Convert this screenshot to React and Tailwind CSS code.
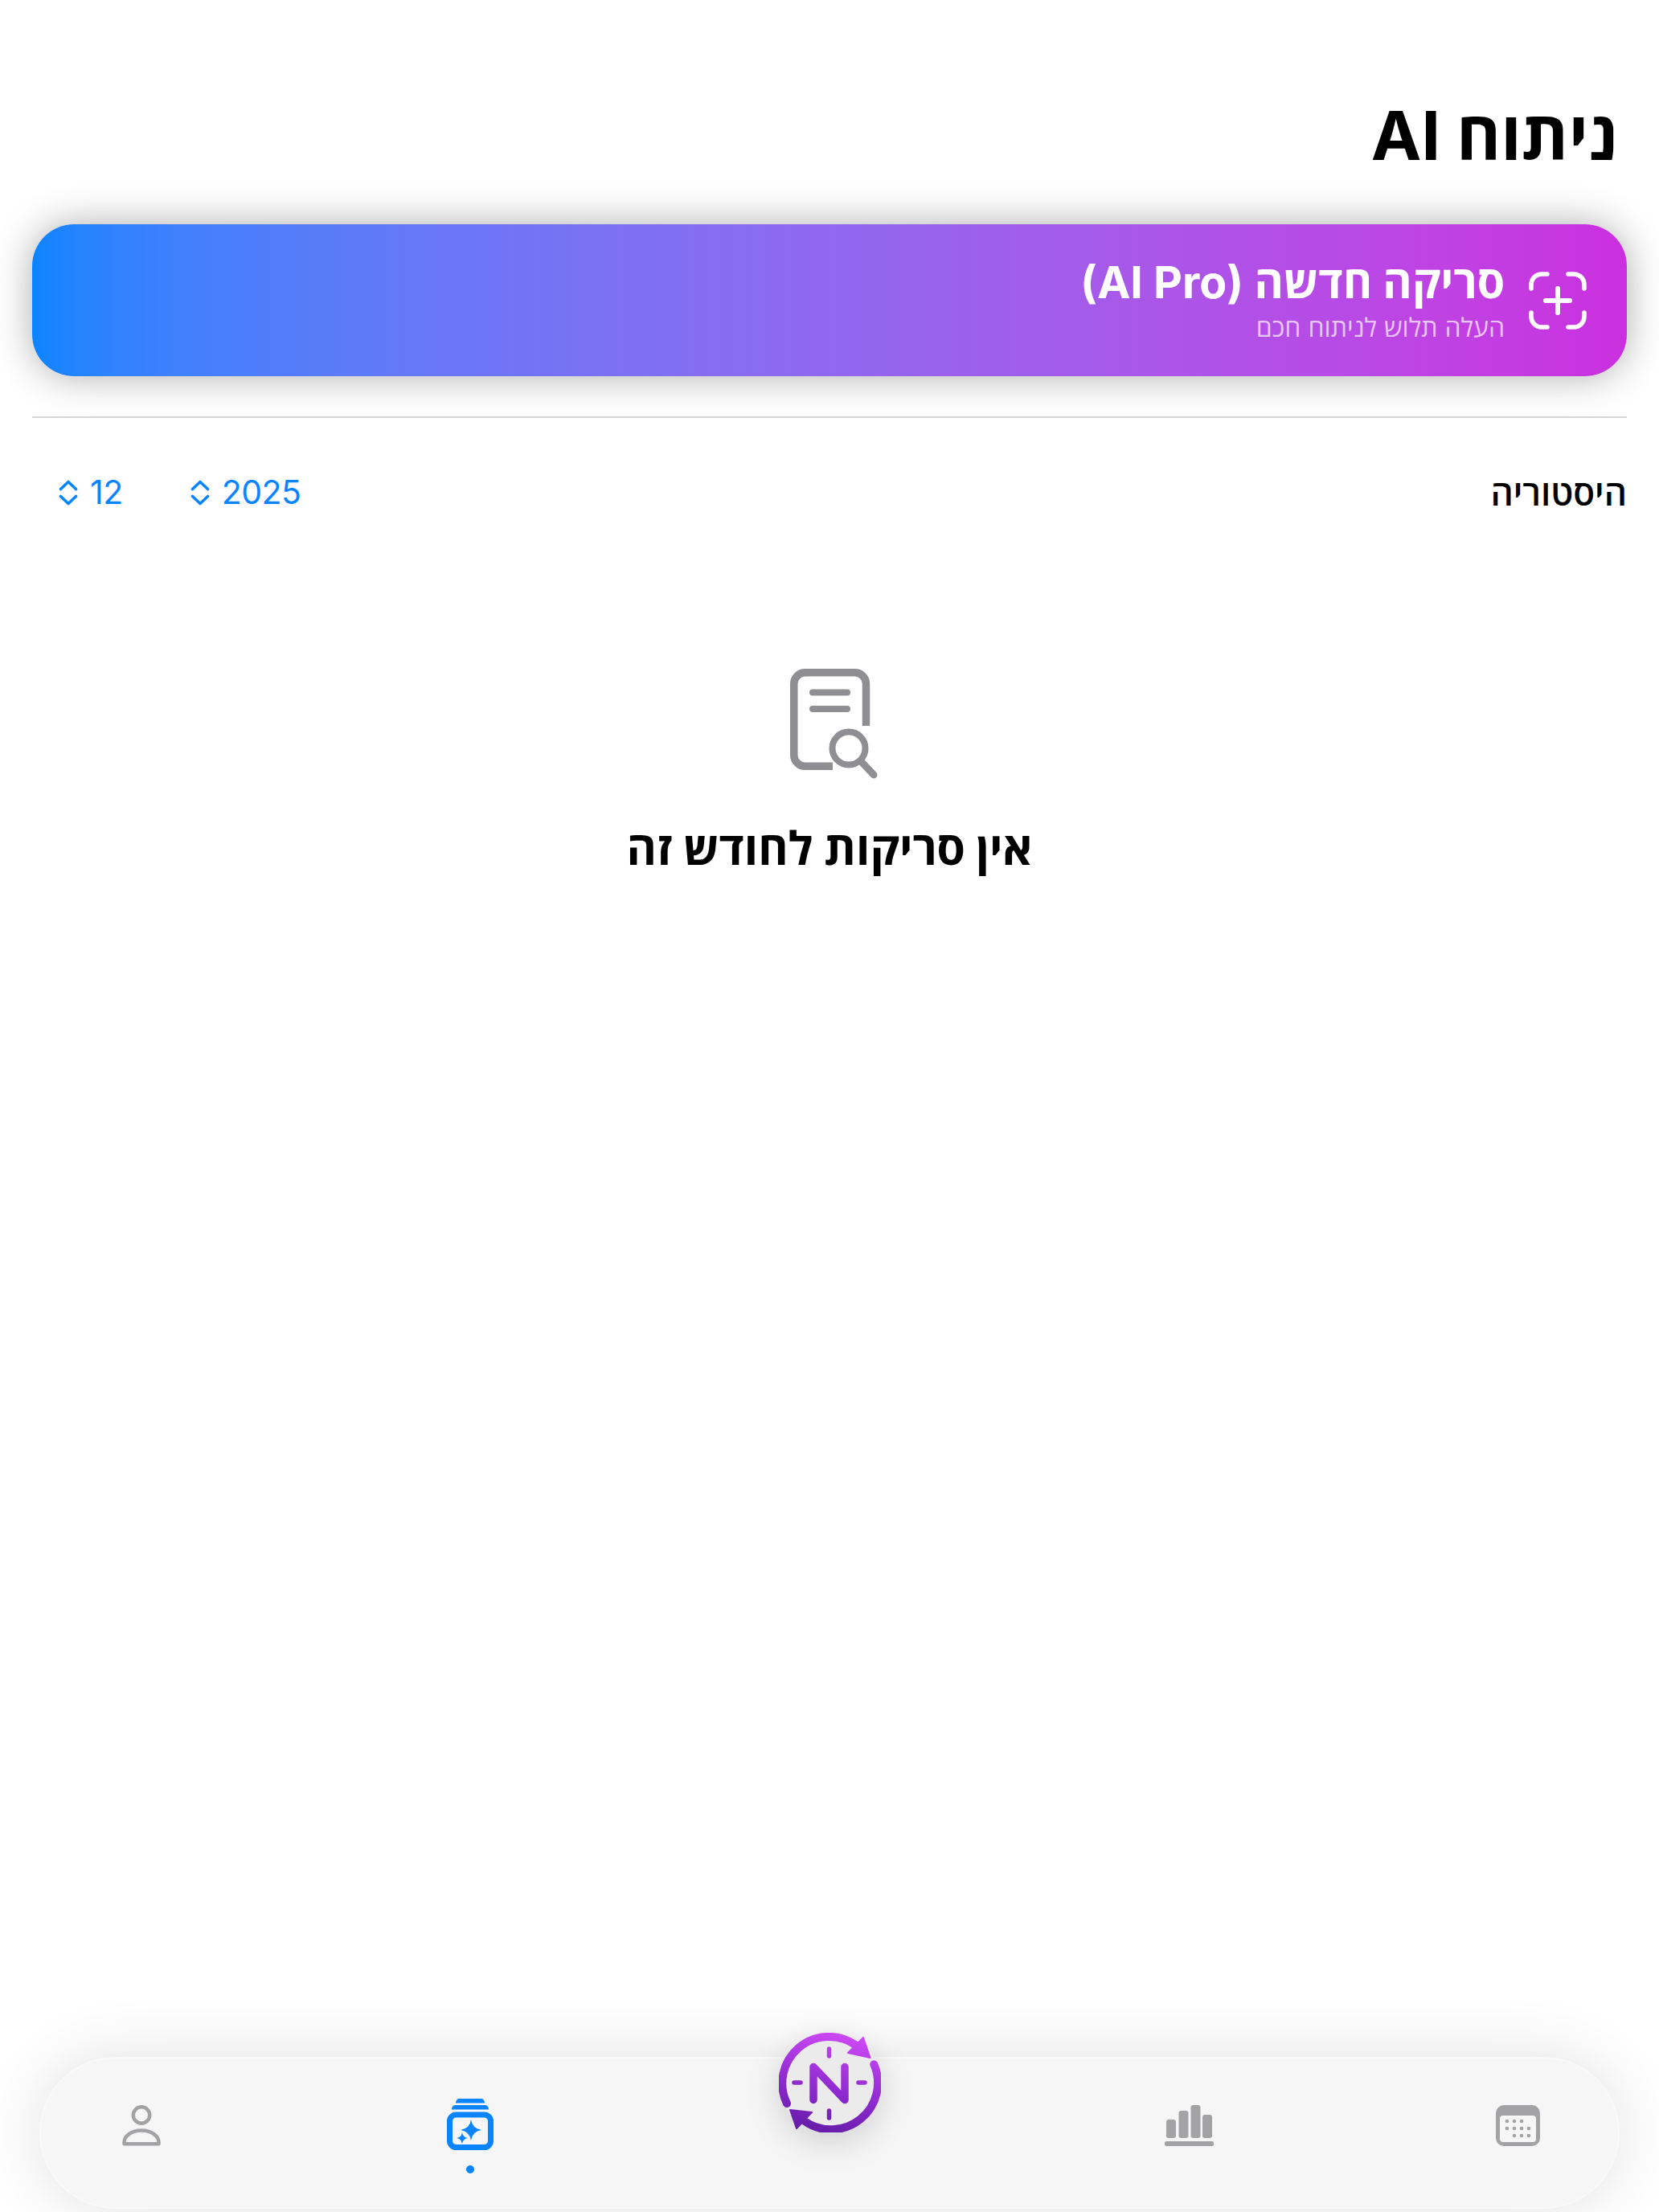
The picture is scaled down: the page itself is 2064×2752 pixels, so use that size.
const GRAY = "#a3a3a6";

function Chevrons() {
  return (
    <svg width="24" height="32" viewBox="0 0 24 32" fill="none" stroke="#0a84ff" strokeWidth="3.6" strokeLinecap="round" strokeLinejoin="round">
      <path d="M2.5 11.5 12 2.5l9.5 9" />
      <path d="M2.5 20.5 12 29.5l9.5-9" />
    </svg>
  );
}

function ScanIcon() {
  return (
    <svg width="72" height="72" viewBox="0 0 72 72" fill="none" stroke="white" strokeWidth="5.5" strokeLinecap="round">
      <path d="M3 21v-5A13 13 0 0 1 16 3h7" />
      <path d="M49 3h7a13 13 0 0 1 13 13v5" />
      <path d="M69 51v5a13 13 0 0 1-13 13h-7" />
      <path d="M23 69h-7A13 13 0 0 1 3 56v-5" />
      <path strokeWidth="6" d="M36 21v30M21 36h30" />
    </svg>
  );
}

function EmptyIcon() {
  return (
    <svg width="110" height="138" viewBox="0 0 110 138" fill="none" stroke="#8e8e93">
      <path strokeWidth="9.5" d="M94.5 71V18.75a14 14 0 0 0-14-14H18.75a14 14 0 0 0-14 14V107a14 14 0 0 0 14 14.25H53" />
      <path strokeWidth="8" strokeLinecap="round" d="M28 29.5h43M28 50h43" />
      <circle cx="73" cy="99" r="20.5" strokeWidth="8" />
      <path strokeWidth="9" strokeLinecap="round" d="M88 115l16 17" />
    </svg>
  );
}

function PersonIcon() {
  return (
    <svg width="48" height="51" viewBox="0 0 48 51" fill="none" stroke={GRAY} strokeWidth="4.5">
      <circle cx="24" cy="12.5" r="10.2" />
      <path strokeLinejoin="round" d="M2.5 46.5v1.7h43v-1.7C45.5 38 36 31.5 24 31.5S2.5 38 2.5 46.5z" />
    </svg>
  );
}

function ScansIcon() {
  return (
    <svg width="58" height="65" viewBox="0 0 58 65" fill="#0a84ff">
      <path d="M11 6.500C11 3 13 1 16 1h26c3 0 5 2 5 5.500z" />
      <path d="M6 14.500C6 11 8 9 11 9h36c3 0 5 2 5 5.500z" />
      <rect x="3.500" y="21" width="51" height="40.500" rx="8" fill="none" stroke="#0a84ff" strokeWidth="7" />
      <path d="M30 27Q31.500 38 43 40 31.500 42 30 53 28.500 42 17 40 28.500 38 30 27z" />
      <path d="M19 43Q20 49 26 50 20 51 19 57 18 51 12 50 18 49 19 43z" />
    </svg>
  );
}

function LogoIcon() {
  return (
    <svg width="127" height="124" viewBox="30 18 127 124" fill="none">
      <defs>
        <linearGradient id="logoGrad" gradientUnits="userSpaceOnUse" x1="105" y1="20" x2="75" y2="142">
          <stop offset="0" stopColor="#cc48f5" />
          <stop offset="0.55" stopColor="#8f2bd0" />
          <stop offset="1" stopColor="#651ca8" />
        </linearGradient>
      </defs>
      <g stroke="url(#logoGrad)" strokeLinecap="round" strokeLinejoin="round">
        <path strokeWidth="10" d="M40 106A58 58 0 0 1 125 33" />
        <path strokeWidth="10" d="M148.300 57.300A58 58 0 0 1 62 128" />
        <path strokeWidth="9.500" d="M73 101.500V60.500l39 41V60.500" />
        <path strokeWidth="5.500" d="M92.500 38v9M92.500 115v9M49 80h8M129 80h8" />
      </g>
      <path fill="url(#logoGrad)" stroke="url(#logoGrad)" strokeWidth="2" strokeLinejoin="round" d="M135 24l8.500 25-27.500-6z" />
      <path fill="url(#logoGrad)" stroke="url(#logoGrad)" strokeWidth="2" strokeLinejoin="round" d="M44 114l27 3-19 20z" />
    </svg>
  );
}

function ChartIcon() {
  return (
    <svg width="61" height="51" viewBox="0 0 61 51" fill={GRAY}>
      <rect x="2" y="18" width="12" height="23" rx="3" />
      <rect x="17.500" y="7" width="12" height="34" rx="3" />
      <rect x="32.500" y="0" width="12" height="41" rx="3" />
      <rect x="47" y="12" width="12" height="29" rx="3" />
      <rect x="0" y="45" width="61" height="6" rx="2" />
    </svg>
  );
}

function CalendarIcon() {
  const dots = [
    [14, 20], [23, 20], [32, 20],
    [14, 29], [23, 29], [32, 29], [41, 29],
    [23, 38], [32, 38], [41, 38],
  ];
  return (
    <svg width="55" height="51" viewBox="0 0 55 51">
      <rect x="0" y="0" width="55" height="51" rx="10" fill={GRAY} />
      <rect x="5" y="13" width="45" height="33" rx="4" fill="#f6f6f6" />
      {dots.map(([x, y], i) => (
        <circle key={i} cx={x} cy={y} r="2.300" fill={GRAY} />
      ))}
    </svg>
  );
}

export default function App() {
  return (
    <div
      dir="rtl"
      className="flex h-[2752px] flex-col overflow-hidden bg-white px-[40px] font-['Inter','Open_Sans',sans-serif] text-black"
    >
      {/* Header */}
      <h1 className="mr-[12px] pt-[117px] text-[84px] leading-[104px] font-bold">ניתוח AI</h1>

      {/* New scan banner */}
      <div className="mt-[58px] flex h-[189px] items-center gap-[30px] rounded-[52px] bg-gradient-to-l from-[#cb2fdf] to-[#0a84ff] pr-[50px] shadow-[0_0_48px_rgba(0,0,0,0.32)]">
        <ScanIcon />
        <div className="text-white">
          <div className="text-[55.5px] leading-[62px] font-bold">סריקה חדשה (AI Pro)</div>
          <div className="mt-[6px] text-[32px] leading-[40px] text-white/70">העלה תלוש לניתוח חכם</div>
        </div>
      </div>

      <div className="mt-[50px] h-[2px] bg-[#d6d6d8]" />

      {/* History row */}
      <div className="mt-[68px] flex h-[50px] items-center justify-between">
        <span className="text-[44px] font-semibold">היסטוריה</span>
        <div className="flex items-center gap-[84px] pl-[33px] text-[41px] tracking-[-0.5px] text-[#0a84ff]">
          <div className="flex items-center gap-[15px]">
            <span>2025</span>
            <Chevrons />
          </div>
          <div className="flex items-center gap-[15px]">
            <span>12</span>
            <Chevrons />
          </div>
        </div>
      </div>

      {/* Empty state */}
      <div className="mt-[194px] flex flex-col items-center">
        <div className="pl-[12px]">
          <EmptyIcon />
        </div>
        <p className="mt-[50px] text-[57px] leading-[72px] font-bold">אין סריקות לחודש זה</p>
      </div>

      {/* Tab bar */}
      <div className="mx-[9px] mt-auto mb-[4px] flex h-[189px] shrink-0 flex-row-reverse items-start justify-center gap-[289px] rounded-full border-2 border-[#f9f9f9] bg-[#f6f6f6] shadow-[0_0_80px_rgba(0,0,0,0.12)]">
        <div className="mt-[58px] flex w-[120px] justify-center">
          <PersonIcon />
        </div>
        <div className="mt-[49px] flex w-[120px] flex-col items-center">
          <ScansIcon />
          <div className="mt-[19px] size-[10px] rounded-full bg-[#0a84ff]" />
        </div>
        <div className="-mt-[32px] flex w-[196px] justify-center">
          <div className="rounded-full bg-[#ebebeb] shadow-[0_12px_44px_rgba(0,0,0,0.16)]">
            <LogoIcon />
          </div>
        </div>
        <div className="mt-[58px] flex w-[120px] justify-center">
          <ChartIcon />
        </div>
        <div className="mt-[58px] flex w-[120px] justify-center">
          <CalendarIcon />
        </div>
      </div>
    </div>
  );
}
